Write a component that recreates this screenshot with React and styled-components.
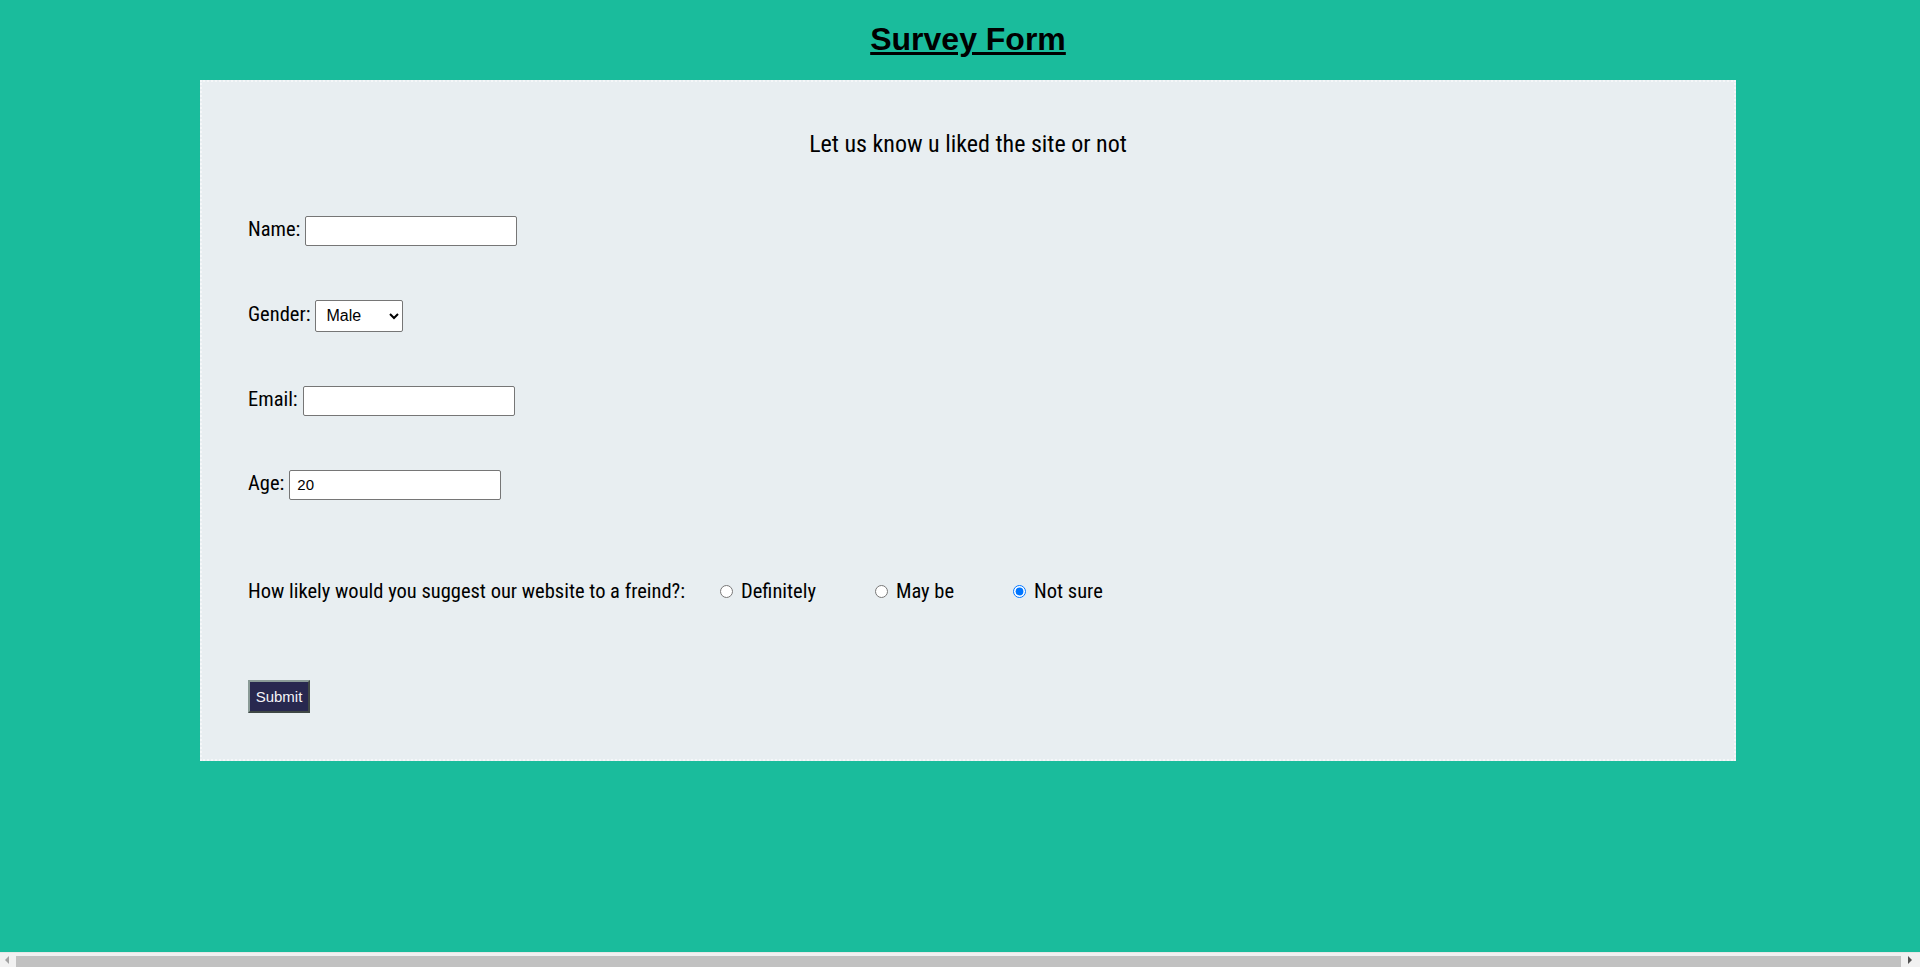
import styled, { createGlobalStyle } from "styled-components";

const GlobalStyle = createGlobalStyle`
    body{
        margin: 8px;
        background-color: #1abc9c;
        font-family: "Liberation Sans", Arial, sans-serif;
    }
`;

const App = () => {
    return (
        <>
            <GlobalStyle />
            <Page>
                <Title>Survey Form</Title>
                <Panel>
                    <Intro>Let us know u liked the site or not</Intro>
                    <Row>
                        <Label htmlFor="name">Name:</Label>
                        <TextInput id="name" type="text" />
                    </Row>
                    <Row>
                        <Label htmlFor="gender">Gender:</Label>
                        <Select id="gender" defaultValue="male">
                            <option value="male">Male</option>
                            <option value="female">Female</option>
                            <option value="other">Other</option>
                        </Select>
                    </Row>
                    <Row>
                        <Label htmlFor="email">Email:</Label>
                        <TextInput id="email" type="email" />
                    </Row>
                    <Row>
                        <Label htmlFor="age">Age:</Label>
                        <TextInput id="age" type="number" defaultValue="20" />
                    </Row>
                    <QuestionRow>
                        <Label>How likely would you suggest our website to a freind?:</Label>
                        <Options>
                            <Option>
                                <Radio type="radio" name="suggest" value="definitely" />
                                Definitely
                            </Option>
                            <Option>
                                <Radio type="radio" name="suggest" value="maybe" />
                                May be
                            </Option>
                            <Option>
                                <Radio type="radio" name="suggest" value="notsure" defaultChecked />
                                Not sure
                            </Option>
                        </Options>
                    </QuestionRow>
                    <SubmitButton type="submit">Submit</SubmitButton>
                </Panel>
            </Page>
            {/* the page is a few px wider than the window, so a horizontal scrollbar shows */}
            <ScrollBar>
                <Arrow $side="left" />
                <Thumb />
                <Arrow $side="right" />
            </ScrollBar>
        </>
    );
};

export default App;

const narrow = `"Roboto Condensed", "Noto Sans Condensed", "DejaVu Sans Condensed", sans-serif`;

const Page = styled.div`
    width: 100vw;
`;

const Title = styled.h1`
    margin: 13.44px 0 21.44px;
    text-align: center;
    font-size: 32px;
    font-weight: 700;
    text-decoration: underline;
    color: #000;
`;

const Panel = styled.form`
    width: 80%;
    margin: 0 auto;
    box-sizing: border-box;
    background-color: #e8eef1;
    border: 2px dotted #f5f7f9;
    padding: 48px 46px 46px;
    font-family: ${narrow};
`;

const Intro = styled.p`
    margin: 0 0 58px;
    text-align: center;
    font-size: 24px;
`;

const Row = styled.div`
    display: flex;
    align-items: baseline;
    gap: 5px;
    margin-bottom: 54px;
`;

const Label = styled.label`
    font-size: 20.5px;
    color: #000;
`;

const TextInput = styled.input`
    box-sizing: border-box;
    width: 212px;
    height: 30px;
    padding: 0 7px;
    border: 1px solid #767676;
    border-radius: 2px;
    background: #fff;
    font-family: "Liberation Sans", Arial, sans-serif;
    font-size: 15px;
    -moz-appearance: textfield;
    &::-webkit-inner-spin-button,
    &::-webkit-outer-spin-button{
        -webkit-appearance: none;
        margin: 0;
    }
`;

const Select = styled.select`
    box-sizing: border-box;
    width: 88px;
    height: 32px;
    padding: 0 6px;
    border: 1px solid #767676;
    border-radius: 2px;
    background: #fff;
    font-family: "Liberation Sans", Arial, sans-serif;
    font-size: 16px;
`;

const QuestionRow = styled.div`
    display: flex;
    align-items: baseline;
    margin: 79px 0 0;
`;

const Options = styled.div`
    display: flex;
    align-items: baseline;
    gap: 59px;
    margin-left: 35px;
`;

const Option = styled.label`
    display: flex;
    align-items: baseline;
    gap: 8px;
    font-size: 20.5px;
`;

const Radio = styled.input`
    width: 13px;
    height: 13px;
    margin: 0;
    accent-color: #0075ff;
`;

const SubmitButton = styled.button`
    display: block;
    margin-top: 77px;
    width: 62px;
    height: 33px;
    padding: 0;
    background-color: #28284f;
    color: #f4f4f8;
    border: 2px outset #8a9b97;
    font-family: "Liberation Sans", Arial, sans-serif;
    font-size: 15px;
`;

const ScrollBar = styled.div`
    position: fixed;
    left: 0;
    right: 0;
    bottom: 0;
    height: 14px;
    display: flex;
    align-items: flex-end;
    gap: 7px;
    padding: 0 8px 0 5px;
    background: #f1f1f1;
    border-top: 1px solid #e6e6e6;
`;

const Thumb = styled.div`
    flex: 1;
    height: 11px;
    background: #c1c1c1;
`;

const Arrow = styled.div`
    align-self: center;
    width: 0;
    height: 0;
    border-top: 4px solid transparent;
    border-bottom: 4px solid transparent;
    ${(p) => p.$side === "left" ? "border-right: 4px solid #a3a3a3;" : "border-left: 4px solid #505050;"}
`;
